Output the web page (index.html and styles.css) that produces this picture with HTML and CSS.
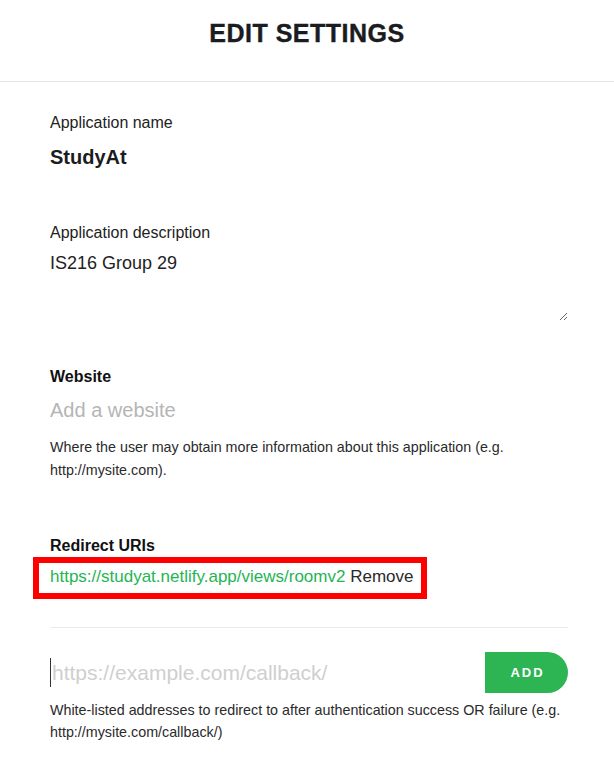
FILE: index.html
```html
<!DOCTYPE html>
<html lang="en">
<head>
<meta charset="utf-8">
<title>Edit settings</title>
<link rel="stylesheet" href="styles.css">
</head>
<body>
<header class="header">
  <h1 class="title">EDIT SETTINGS</h1>
</header>
<main class="content">
  <section class="group">
    <div class="label">Application name</div>
    <div class="app-name">StudyAt</div>
  </section>
  <section class="group group-desc">
    <div class="label">Application description</div>
    <textarea class="desc">IS216 Group 29</textarea>
  </section>
  <section class="group group-website">
    <div class="label label-strong">Website</div>
    <input class="website" type="text" placeholder="Add a website">
    <p class="help">Where the user may obtain more information about this application (e.g. http://mysite.com).</p>
  </section>
  <section class="group group-redirect">
    <div class="label label-strong">Redirect URIs</div>
    <div class="uri-box"><span class="uri">https://studyat.netlify.app/views/roomv2</span> <span class="remove">Remove</span></div>
    <div class="divider"></div>
    <div class="add-row">
      <input class="uri-input" type="text" placeholder="https://example.com/callback/">
      <button class="add-btn" type="button">ADD</button>
    </div>
    <p class="help help-2">White-listed addresses to redirect to after authentication success OR failure (e.g. http://mysite.com/callback/)</p>
  </section>
</main>
</body>
</html>
```
FILE: styles.css
```css
* { box-sizing: border-box; }

html, body {
  margin: 0;
  padding: 0;
  background: #ffffff;
}

body {
  font-family: "Liberation Sans", Arial, sans-serif;
  color: #222222;
}

.header {
  height: 82px;
  padding-top: 18px;
  border-bottom: 1px solid #e6e6e6;
  text-align: center;
}

.title {
  margin: 0;
  font-size: 25px;
  line-height: 30px;
  font-weight: 700;
  letter-spacing: 0.5px;
  color: #1b1c1f;
  -webkit-text-stroke: 0.4px #1b1c1f;
}

.content {
  padding: 30px 46px 30px 50px;
}

.label {
  font-size: 16px;
  line-height: 22px;
  color: #222222;
}

.label-strong {
  font-weight: 700;
  color: #111111;
}

.app-name {
  margin-top: 9px;
  font-size: 20px;
  line-height: 28px;
  font-weight: 700;
  color: #1b1c1f;
}

.group-desc { margin-top: 51px; }

.desc {
  display: block;
  width: 100%;
  height: 71px;
  margin: 6px 0 0;
  padding: 0;
  border: 0;
  outline: none;
  resize: vertical;
  font-family: "Liberation Sans", Arial, sans-serif;
  font-size: 18px;
  line-height: 26px;
  color: #222222;
  background: transparent;
}

.group-website { margin-top: 45px; }

.website {
  display: block;
  width: 100%;
  height: 28px;
  margin-top: 8px;
  padding: 0;
  border: 0;
  outline: none;
  font-family: "Liberation Sans", Arial, sans-serif;
  font-size: 20px;
  line-height: 28px;
  color: #222222;
  background: transparent;
}

.website::placeholder { color: #b5b5b5; }

.help {
  margin: 12px 0 0;
  font-size: 14.3px;
  line-height: 23px;
  color: #2a2a2a;
}

.group-redirect { margin-top: 53px; }

.uri-box {
  width: 394px;
  margin-left: -17px;
  padding: 2px 0 4px 11px;
  border: 6px solid #ff0000;
  font-size: 17px;
  line-height: 24px;
  white-space: nowrap;
}

.uri { color: #1fb553; }
.remove { color: #2a2a2a; }

.divider {
  margin-top: 28px;
  height: 1px;
  background: #ebebeb;
}

.add-row {
  display: flex;
  align-items: center;
  margin-top: 24px;
}

.uri-input {
  flex: 1;
  min-width: 0;
  height: 29px;
  padding: 0 0 0 1px;
  border: 0;
  border-left: 1px solid #333333;
  outline: none;
  font-family: "Liberation Sans", Arial, sans-serif;
  font-size: 21px;
  color: #222222;
  background: transparent;
}

.uri-input::placeholder { color: #cfcfcf; }

.add-btn {
  width: 83px;
  height: 41px;
  padding: 0 0 0 2px;
  border: 0;
  border-radius: 0 21px 21px 0;
  background: #2eb553;
  color: #ffffff;
  font-family: "Liberation Sans", Arial, sans-serif;
  font-size: 13px;
  font-weight: 700;
  letter-spacing: 2px;
}

.help-2 {
  margin-top: 6px;
  line-height: 22px;
}
```
